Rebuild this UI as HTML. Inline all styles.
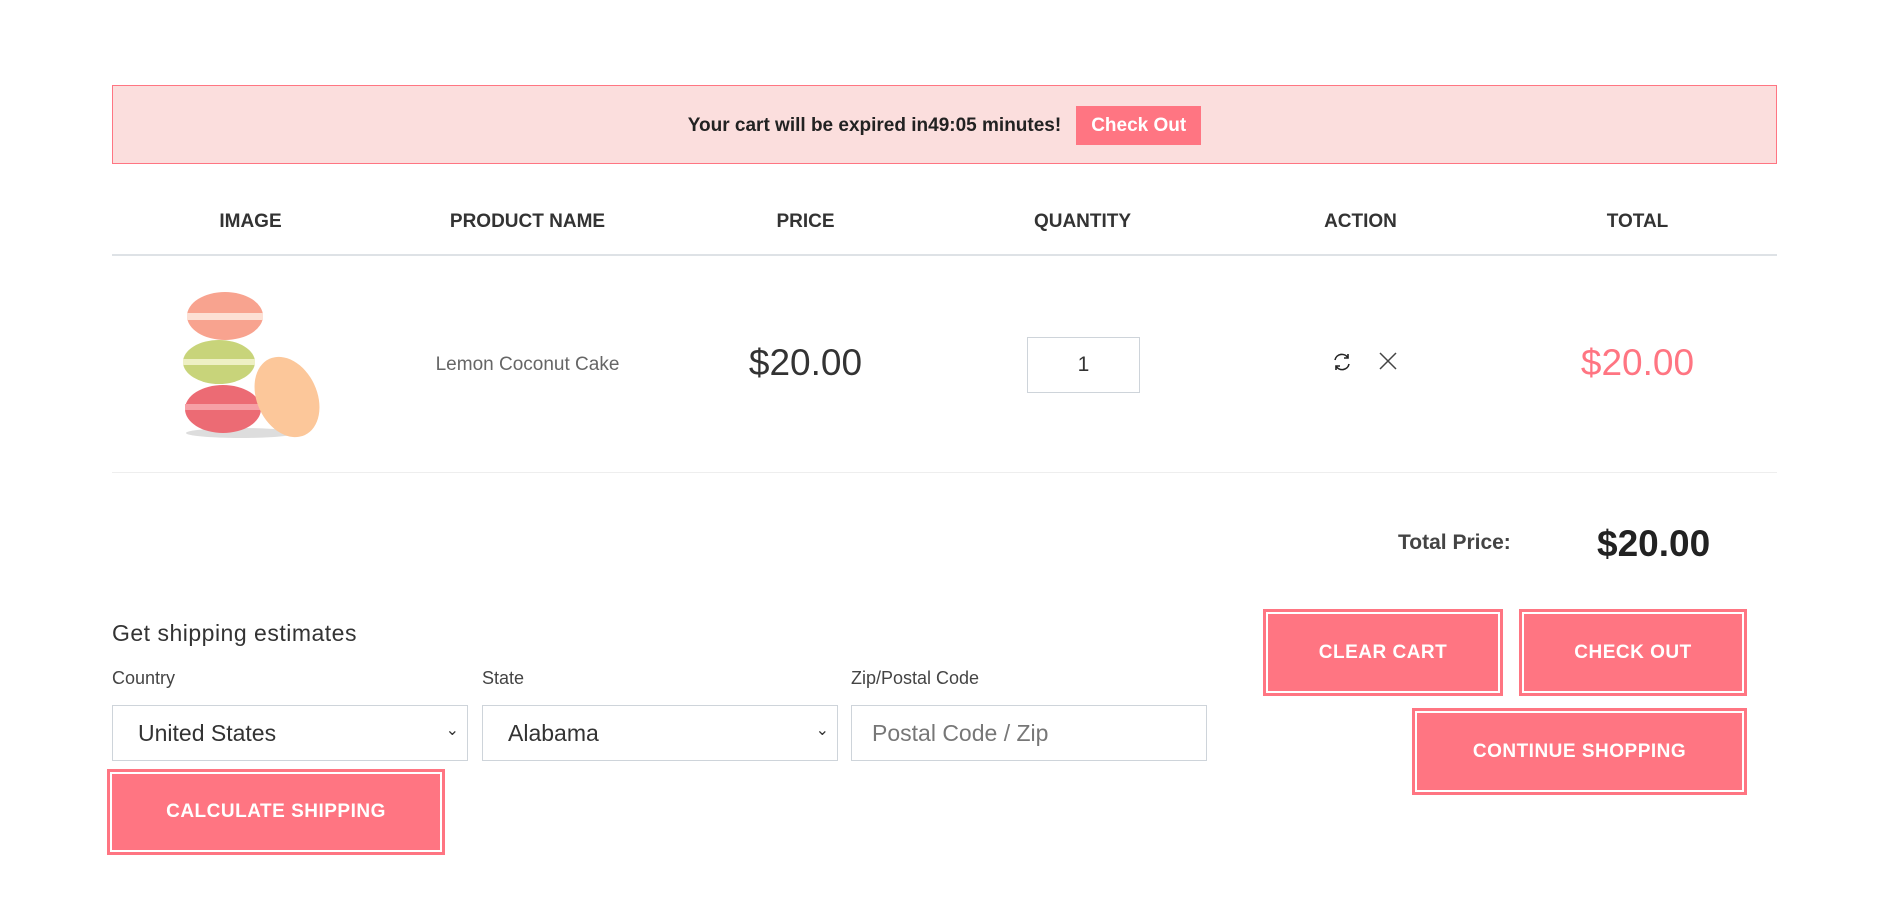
<!DOCTYPE html>
<html><head><meta charset="utf-8"><style>
*{box-sizing:border-box;margin:0;padding:0}
body{width:1888px;height:898px;background:#fff;font-family:"Liberation Sans",Arial,sans-serif;position:relative;overflow:hidden;color:#333}
.a{position:absolute}
.banner{left:112px;top:85px;width:1665px;height:79px;background:#fbdedd;border:1px solid #ff7582}
.btext{left:0;right:0;top:0;height:79px;display:flex;align-items:center;justify-content:center;font-weight:bold;font-size:19px;color:#222}
.cbtn{background:#ff7582;color:#fff;padding:0 15px;height:39px;line-height:39px;margin-left:15px;font-size:19px}
.th{top:211px;width:277px;text-align:center;font-weight:bold;font-size:19px;color:#333}
.line{left:112px;width:1665px;height:2px;background:#dee2e6}
.btn{background:#ff7582;color:#fff;font-weight:bold;font-size:19px;letter-spacing:.5px;display:flex;align-items:center;justify-content:center;border:3px solid #fff;outline:3px solid #ff7582;outline-offset:-1px}
.sel{height:56px;border:1px solid #ced4da;font-size:23px;color:#333;display:flex;align-items:center;padding-left:25px}
.lab{font-size:18px;color:#444;top:668px}
</style></head><body>
<div class="a banner"><div class="a btext">Your cart will be expired in49:05 minutes! <span class="cbtn">Check Out</span></div></div>
<div class="a th" style="left:112px">IMAGE</div>
<div class="a th" style="left:389px">PRODUCT NAME</div>
<div class="a th" style="left:667px">PRICE</div>
<div class="a th" style="left:944px">QUANTITY</div>
<div class="a th" style="left:1222px">ACTION</div>
<div class="a th" style="left:1499px">TOTAL</div>
<div class="a line" style="top:254px"></div>
<svg class="a" style="left:169px;top:289px" width="160" height="152" viewBox="0 0 160 152">
<ellipse cx="72" cy="144" rx="55" ry="5" fill="#ddd"/>
<ellipse cx="54" cy="120" rx="38" ry="24" fill="#ec6b74"/><rect x="16" y="115" width="76" height="6" fill="#f6a0a6"/>
<ellipse cx="50" cy="73" rx="36" ry="22" fill="#c8d47a"/><rect x="14" y="70" width="72" height="6" fill="#eef0c4"/>
<ellipse cx="56" cy="27" rx="38" ry="24" fill="#f8a38f"/><rect x="18" y="24" width="76" height="7" fill="#fde0d4"/>
<ellipse cx="118" cy="108" rx="30" ry="42" transform="rotate(-25 118 108)" fill="#fcc79a"/>
</svg>
<div class="a" style="left:389px;width:277px;top:354px;text-align:center;font-size:19px;color:#666">Lemon Coconut Cake</div>
<div class="a" style="left:667px;width:277px;top:342px;text-align:center;font-size:37px;color:#333">$20.00</div>
<div class="a" style="left:1027px;top:337px;width:113px;height:56px;border:1px solid #ced4da;text-align:center;line-height:54px;font-size:21px;color:#333">1</div>
<svg class="a" style="left:1331px;top:351px" width="22" height="22" viewBox="0 0 22 22" fill="none" stroke="#222" stroke-width="1.6"><path d="M4 9a7 7 0 0 1 13-2M18 13a7 7 0 0 1-13 2"/><path d="M17 3v4h-4M5 19v-4h4"/></svg>
<svg class="a" style="left:1378px;top:351px" width="20" height="20" viewBox="0 0 20 20" stroke="#444" stroke-width="1.5"><path d="M2 2L18 18M18 2L2 18"/></svg>
<div class="a" style="left:1499px;width:277px;top:342px;text-align:center;font-size:37px;color:#ff7582">$20.00</div>
<div class="a line" style="top:472px;height:1px;background:#eee"></div>
<div class="a" style="left:1398px;top:531px;font-size:21px;font-weight:bold;color:#444">Total Price:</div>
<div class="a" style="left:1597px;top:523px;font-size:37px;font-weight:bold;color:#222">$20.00</div>
<div class="a" style="left:112px;top:620px;font-size:23px;color:#333;letter-spacing:.5px">Get shipping estimates</div>
<div class="a lab" style="left:112px">Country</div>
<div class="a lab" style="left:482px">State</div>
<div class="a lab" style="left:851px">Zip/Postal Code</div>
<div class="a sel" style="left:112px;top:705px;width:356px">United States<span class="a" style="right:8px;top:14px;font-size:16px">&#8964;</span></div>
<div class="a sel" style="left:482px;top:705px;width:356px">Alabama<span class="a" style="right:8px;top:14px;font-size:16px">&#8964;</span></div>
<div class="a sel" style="left:851px;top:705px;width:356px;color:#777;padding-left:20px">Postal Code / Zip</div>
<div class="a btn" style="left:109px;top:771px;width:334px;height:82px">CALCULATE SHIPPING</div>
<div class="a btn" style="left:1265px;top:611px;width:236px;height:83px">CLEAR CART</div>
<div class="a btn" style="left:1521px;top:611px;width:224px;height:83px">CHECK OUT</div>
<div class="a btn" style="left:1414px;top:710px;width:331px;height:83px">CONTINUE SHOPPING</div>
</body></html>
